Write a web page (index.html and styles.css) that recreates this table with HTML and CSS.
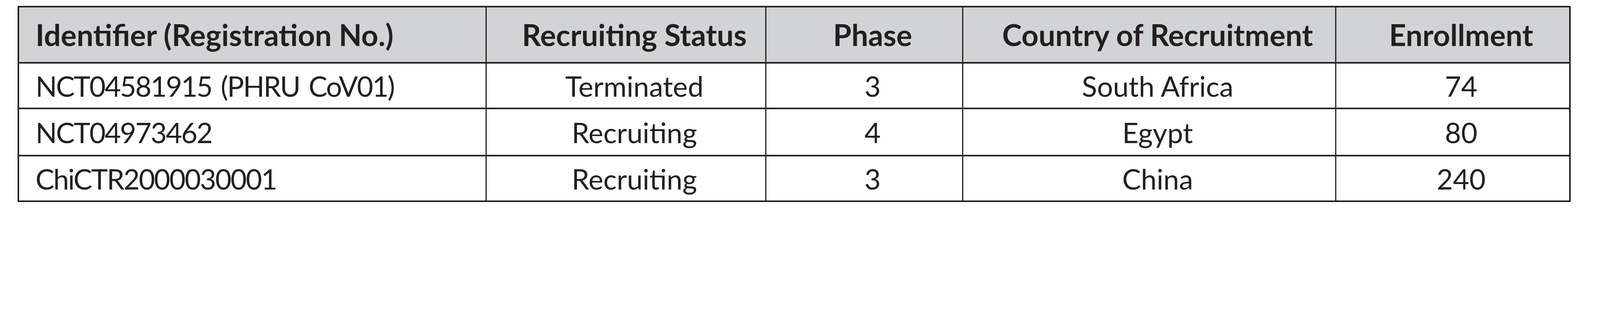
FILE: index.html
```html
<!DOCTYPE html>
<html lang="en">
<head>
<meta charset="utf-8">
<title>Clinical trials</title>
<link rel="stylesheet" href="styles.css">
</head>
<body>
<div class="page">
  <table class="trials">
    <colgroup>
      <col class="c1"><col class="c2"><col class="c3"><col class="c4"><col class="c5">
    </colgroup>
    <thead>
      <tr class="head">
        <th class="left">Identifier (Registration No.)</th>
        <th>Recruiting Status</th>
        <th>Phase</th>
        <th>Country of Recruitment</th>
        <th class="last">Enrollment</th>
      </tr>
    </thead>
    <tbody>
      <tr class="r1">
        <td class="left id">NCT04581915 (PHRU CoV01)</td>
        <td>Terminated</td>
        <td>3</td>
        <td>South Africa</td>
        <td class="last">74</td>
      </tr>
      <tr class="r2">
        <td class="left id">NCT04973462</td>
        <td>Recruiting</td>
        <td>4</td>
        <td>Egypt</td>
        <td class="last">80</td>
      </tr>
      <tr class="r3">
        <td class="left id">ChiCTR2000030001</td>
        <td>Recruiting</td>
        <td>3</td>
        <td>China</td>
        <td class="last">240</td>
      </tr>
    </tbody>
  </table>
</div>
</body>
</html>
```

FILE: styles.css
```css
html, body {
  margin: 0;
  padding: 0;
  background: #ffffff;
}

.page {
  padding: 15px 0 0 45px;
}

.trials {
  border-collapse: separate;
  border-spacing: 0;
  table-layout: fixed;
  width: 3976px;
  border-left: 4px solid #231f20;
  border-top: 4px solid #231f20;
  font-family: "Lato", "Open Sans", sans-serif;
  font-size: 72px;
  color: #231f20;
}

.c1 { width: 1197px; }
.c2 { width: 716px; }
.c3 { width: 504px; }
.c4 { width: 955px; }
.c5 { width: 600px; }

.trials th,
.trials td {
  box-sizing: border-box;
  border-right: 3px solid #231f20;
  border-bottom: 4px solid #231f20;
  padding: 0 0 0 43px;
  text-align: center;
  vertical-align: middle;
  line-height: 1;
  white-space: nowrap;
}

.trials th {
  background: #d2d3d5;
  font-weight: 700;
  font-size: 76px;
}

.trials td {
  font-weight: 400;
}

.trials .left {
  text-align: left;
  padding-left: 42px;
}

.trials .id {
  letter-spacing: -2.6px;
  word-spacing: 7px;
}

.trials .last {
  border-right-width: 4px;
}

.head { height: 144px; }
.r1 { height: 117px; }
.r2 { height: 121px; }
.r3 { height: 117px; }
```
